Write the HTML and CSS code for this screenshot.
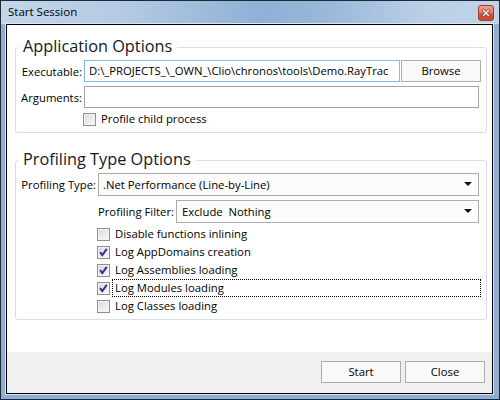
FILE: index.html
```html
<!DOCTYPE html>
<html>
<head>
<meta charset="utf-8">
<link rel="stylesheet" href="styles.css">
</head>
<body>
<div class="window">
  <div class="titlebar">
    <span class="title">Start Session</span>
    <div class="close">
      <svg width="14" height="14" viewBox="0 0 14 14">
        <path d="M4.5 4.5 L9.5 9.5 M9.5 4.5 L4.5 9.5" stroke="#7a2c1f" stroke-width="2.6" stroke-linecap="square"/>
        <path d="M4.5 4.5 L9.5 9.5 M9.5 4.5 L4.5 9.5" stroke="#ffffff" stroke-width="1.5" stroke-linecap="square"/>
      </svg>
    </div>
  </div>
  <div class="frame">
    <div class="client">
      <div class="main">
        <fieldset class="group g1">
          <legend>Application Options</legend>
          <div class="row">
            <span class="lbl w66">Executable:</span>
            <div class="field exe">D:\_PROJECTS_\_OWN_\Clio\chronos\tools\Demo.RayTrac</div>
            <div class="btn browse">Browse</div>
          </div>
          <div class="row r2">
            <span class="lbl w66">Arguments:</span>
            <div class="field args"></div>
          </div>
          <div class="check c1">
            <span class="cb"></span>
            <span class="cl">Profile child process</span>
          </div>
        </fieldset>

        <fieldset class="group g2">
          <legend>Profiling Type Options</legend>
          <div class="row sel-row">
            <span class="lbl w80">Profiling Type:</span>
            <div class="select s1"><span class="sv">.Net Performance (Line-by-Line)</span><span class="arrow"></span></div>
          </div>
          <div class="row sel-row pf">
            <span class="lbl w80">Profiling Filter:</span>
            <div class="select s2"><span class="sv sv2">Exclude&nbsp;&nbsp;Nothing</span><span class="arrow"></span></div>
          </div>
          <div class="checks">
            <div class="check">
              <span class="cb"></span>
              <span class="cl">Disable functions inlining</span>
            </div>
            <div class="check">
              <span class="cb on"><svg width="11" height="11" viewBox="0 0 11 11"><path d="M2 5.2 L4.3 8 L8.8 1.8" fill="none" stroke="#2e3590" stroke-width="2"/></svg></span>
              <span class="cl">Log AppDomains creation</span>
            </div>
            <div class="check">
              <span class="cb on"><svg width="11" height="11" viewBox="0 0 11 11"><path d="M2 5.2 L4.3 8 L8.8 1.8" fill="none" stroke="#2e3590" stroke-width="2"/></svg></span>
              <span class="cl">Log Assemblies loading</span>
            </div>
            <div class="check">
              <span class="cb on"><svg width="11" height="11" viewBox="0 0 11 11"><path d="M2 5.2 L4.3 8 L8.8 1.8" fill="none" stroke="#2e3590" stroke-width="2"/></svg></span>
              <span class="cl focus">Log Modules loading</span>
            </div>
            <div class="check">
              <span class="cb"></span>
              <span class="cl">Log Classes loading</span>
            </div>
          </div>
        </fieldset>
      </div>
      <div class="footer">
        <div class="btn">Start</div>
        <div class="btn">Close</div>
      </div>
    </div>
  </div>
</div>
</body>
</html>
```

FILE: styles.css
```css
* { box-sizing: border-box; }
html, body { margin: 0; padding: 0; }
body {
  width: 500px;
  height: 400px;
  overflow: hidden;
  font-family: "Open Sans", "Noto Sans", sans-serif;
  font-size: 11.3px;
  color: #000;
}
.window {
  width: 500px;
  height: 400px;
  border: 1px solid #1e2a36;
  background: #8eafd3;
  display: flex;
  flex-direction: column;
}
.titlebar {
  height: 23px;
  flex: none;
  display: flex;
  align-items: flex-start;
  justify-content: space-between;
  background: linear-gradient(to right, #c4d6ea 0%, #b3cae3 25%, #8fb1d6 52%, #98b7d9 65%, #bad0e7 85%, #c0d4e9 100%);
}
.title {
  padding: 3px 0 0 7px;
  font-size: 11.5px;
  line-height: 16px;
  color: #000;
}
.close {
  width: 16px;
  height: 16px;
  margin: 4px 5px 0 0;
  border: 1px solid #9a4030;
  border-radius: 3px;
  background-color: #d9614a;
  background-image: linear-gradient(to bottom, #eea08c 0%, #e4826b 45%, #d2543b 55%, #cc4a31 100%);
}
.close svg { display: block; }
.frame {
  flex: 1;
  display: flex;
  padding: 0 6px 5px 5px;
}
.client {
  flex: 1;
  border: 1px solid #000;
  box-shadow: 0 0 0 1px #dbe6f1;
  background: #fff;
  display: flex;
  flex-direction: column;
}
.main {
  flex: 1;
  padding-top: 11px;
}
.group {
  border: 1px solid #d5dfe5;
  border-radius: 3px;
  margin: 0 5px 0 8px;
  padding: 1px 5px 4px 0;
  min-width: 0;
}
.group legend {
  margin-left: 2px;
  padding: 0 5px 3px;
  font-size: 16.3px;
  line-height: 20px;
  color: #141824;
}
.g2 { margin-top: 16px; }
.row {
  display: flex;
  align-items: center;
  height: 22px;
}
.r2 { margin-top: 4px; }
.sel-row { height: 23px; }
.pf { margin-top: 4px; padding-left: 78px; }
.lbl {
  text-align: right;
  white-space: nowrap;
  flex: none;
}
.w66 { width: 66px; }
.w80 { width: 80px; }
.field {
  height: 22px;
  border: 1px solid #a3a3a3;
  background: #fff;
  margin-left: 2px;
  padding: 0 4px;
  line-height: 20px;
  white-space: nowrap;
  overflow: hidden;
}
.exe {
  width: 316px;
  border-color: #84b7ea;
  flex: none;
}
.args { width: 395px; flex: none; }
.btn {
  width: 80px;
  height: 22px;
  border: 1px solid #acacac;
  background: #f9f9f9;
  text-align: center;
  line-height: 20px;
  flex: none;
}
.browse { margin-left: 1px; }
.select {
  height: 23px;
  margin-left: 2px;
  border: 1px solid #acacac;
  background: #fbfbfb;
  display: flex;
  align-items: center;
  flex: none;
}
.s1 { width: 381px; }
.s2 { width: 303px; }
.sv {
  flex: 1;
  padding-left: 4px;
  white-space: pre;
}
.sv2 { padding-left: 5px; }
.arrow {
  width: 0;
  height: 0;
  border-left: 4px solid transparent;
  border-right: 4px solid transparent;
  border-top: 4px solid #111;
  margin: 0 6px 1px 0;
}
.check {
  display: flex;
  align-items: center;
  height: 18px;
}
.c1 { margin: 2px 0 0 67px; }
.checks { margin: 2px 0 0 81px; }
.cb {
  width: 13px;
  height: 13px;
  flex: none;
  border: 1px solid #8f8f8f;
  background: linear-gradient(135deg, #d6d6d6 0%, #eeeeee 60%, #fafafa 100%);
  box-shadow: inset 0 0 0 1px #f3f3f3;
  margin-right: 2px;
}
.cb svg { display: block; }
.cl {
  flex: 1;
  height: 18px;
  border: 1px solid transparent;
  padding-left: 2px;
  line-height: 16px;
  white-space: nowrap;
}
.cl.focus { border: 1px dotted #000; }
.footer {
  height: 41px;
  flex: none;
  background: #f0f0f0;
  display: flex;
  justify-content: flex-end;
  align-items: flex-start;
  gap: 4px;
  padding: 9px 7px 0 0;
}
```
